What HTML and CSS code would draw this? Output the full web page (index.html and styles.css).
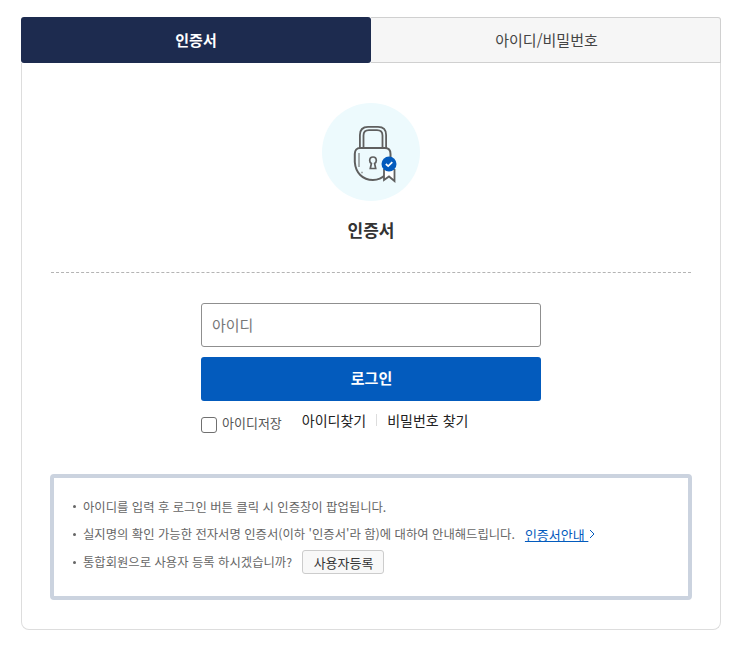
FILE: index.html
```html
<!DOCTYPE html>
<html lang="ko">
<head>
<meta charset="utf-8">
<title>인증서 로그인</title>
<link rel="stylesheet" href="styles.css">
</head>
<body>
<main class="wrap">
  <div class="tabs">
    <div class="tab active">인증서</div>
    <div class="tab">아이디/비밀번호</div>
  </div>
  <section class="card">
    <div class="hero">
      <div class="circle">
        <svg class="lock" width="46" height="58" viewBox="0 0 46 58" fill="none" stroke="#5f5f5f" stroke-width="1.800">
          <path d="M7.900 23V10C7.900 4.800 11 1.900 16 1.900H26C31 1.900 34.100 4.800 34.100 10V23" />
          <path d="M11.500 23V10.500C11.500 7 13.500 5.200 17 5.200H25C28.500 5.200 30.500 7 30.500 10.500V23" />
          <path d="M8 23H33C36.500 23 38.500 25.500 38.500 29V36C38 47 31 55 21 55C10.500 55 3.500 47.500 2.800 37V29C2.800 25.500 4.800 23 8 23Z" stroke-width="2" />
          <path d="M7 28V42" stroke-width="1" />
          <path d="M9.500 47.500H10.500" stroke-width="1.500" />
          <path d="M18.300 43.500H23.700L22.600 38.500C23.700 37.900 24.300 36.800 24.300 35.500C24.300 33.500 22.900 32 21 32C19.100 32 17.700 33.500 17.700 35.500C17.700 36.800 18.300 37.900 19.400 38.500Z" stroke-width="1.700" />
          <path d="M32 44V55L37 51.500L42.500 56V44" fill="#fff" stroke-width="1.800" />
          <circle cx="37" cy="39" r="7.500" fill="#035bbd" stroke="none" />
          <path d="M33.800 39L36.200 41.200L40.300 37.200" stroke="#fff" stroke-width="1.700" />
        </svg>
      </div>
      <h1 class="title">인증서</h1>
    </div>
    <form class="form">
      <input class="field" type="text" placeholder="아이디">
      <button class="submit" type="button">로그인</button>
      <div class="options">
        <label class="save"><span class="check"></span><span>아이디저장</span></label>
        <div class="links">
          <a class="find">아이디찾기</a>
          <span class="sep"></span>
          <a class="find">비밀번호 찾기</a>
        </div>
      </div>
    </form>
    <ul class="notice">
      <li><span>아이디를 입력 후 로그인 버튼 클릭 시 인증창이 팝업됩니다.</span></li>
      <li>
        <span>실지명의 확인 가능한 전자서명 인증서(이하 '인증서'라 함)에 대하여 안내해드립니다.</span>
        <a class="guide">인증서안내&nbsp;</a>
        <svg class="chev" width="6" height="10" viewBox="0 0 6 10" fill="none" stroke="#035bbd"><path d="M1 1L5 5L1 9"/></svg>
      </li>
      <li><span>통합회원으로 사용자 등록 하시겠습니까?</span><button class="reg" type="button">사용자등록</button></li>
    </ul>
  </section>
</main>
</body>
</html>
```
FILE: styles.css
```css
* { box-sizing: border-box; }
html, body { margin: 0; padding: 0; background: #fff; }
body {
  height: 654px;
  overflow: hidden;
  font-family: "Noto Sans CJK KR", "Noto Sans", sans-serif;
  color: #333;
}
.wrap { width: 700px; margin: 17px 0 0 21px; }
.tabs { display: flex; height: 46px; }
.tab {
  flex: 0 0 350px;
  display: flex;
  align-items: center;
  justify-content: center;
  padding: 0 0 2px 2px;
  font-size: 15px;
  color: #444;
  background: #f6f6f6;
  border: 1px solid #d0d0d0;
  border-left: 0;
  border-radius: 0 3px 0 0;
}
.tab.active {
  padding-left: 0;
  background: #1d2b4f;
  border: 0;
  border-radius: 3px;
  color: #fff;
  font-weight: 700;
}
.card {
  height: 567px;
  border: 1px solid #ddd;
  border-top: 0;
  border-radius: 0 0 8px 8px;
  padding: 40px 28px 0;
}
.hero {
  display: flex;
  flex-direction: column;
  align-items: center;
  height: 170px;
  margin: 0 1px;
  border-bottom: 1px dashed #b4b4b4;
}
.circle {
  width: 98px;
  height: 98px;
  border-radius: 50%;
  background: #edfafd;
  display: flex;
  align-items: center;
  justify-content: center;
}
.lock { margin: 4px 0 0 8px; }
.title {
  margin: 16px 0 0;
  font-size: 17px;
  line-height: 26px;
  font-weight: 700;
  color: #333;
}
.form { width: 340px; margin: 30px auto 0; }
.field {
  display: block;
  width: 100%;
  height: 44px;
  padding: 0 10px 2px;
  border: 1px solid #8f8f8f;
  border-radius: 3px;
  font: 15px "Noto Sans CJK KR", sans-serif;
}
.field::placeholder { color: #777; opacity: 1; }
.submit {
  display: block;
  width: 100%;
  height: 44px;
  margin-top: 10px;
  padding: 0 0 3px 1px;
  border: 0;
  border-radius: 3px;
  background: #035bbd;
  color: #fff;
  font: 700 15px "Noto Sans CJK KR", sans-serif;
}
.options { display: flex; align-items: flex-start; margin-top: 10px; }
.save {
  display: flex;
  align-items: flex-start;
  margin-top: 6px;
  font-size: 13px;
  line-height: 12px;
  color: #555;
}
.check {
  width: 16px;
  height: 16px;
  margin-right: 5px;
  border: 1px solid #707070;
  border-radius: 3px;
  background: #fff;
}
.links { display: flex; align-items: center; margin: -2px 0 0 20px; font-size: 14px; line-height: 22px; color: #222; }
.sep { width: 1px; height: 12px; margin: 0 10px; background: #ddd; }
.notice {
  list-style: none;
  height: 126px;
  margin: 41px 0 0;
  padding: 14px 0 0 18px;
  border: 4px solid #cbd3df;
  border-radius: 4px;
  font-size: 12.330px;
  color: #666;
}
.notice li { position: relative; display: flex; align-items: center; height: 28px; padding-left: 11px; white-space: nowrap; }
.notice li:first-child { padding-top: 2px; }
.notice li::before {
  content: "";
  position: absolute;
  left: 1px;
  top: 13px;
  width: 3px;
  height: 3px;
  border-radius: 50%;
  background: #666;
}
.guide { margin-left: 10px; color: #035bbd; text-decoration: underline; font-size: 13px; }
.chev { margin-left: 1px; }
.reg {
  height: 24px;
  width: 82px;
  margin-left: 10px;
  padding: 0 0 0 1px;
  border: 1px solid #ccc;
  border-radius: 3px;
  background: #f8f8f8;
  color: #333;
  font: 13px "Noto Sans CJK KR", sans-serif;
}
```
